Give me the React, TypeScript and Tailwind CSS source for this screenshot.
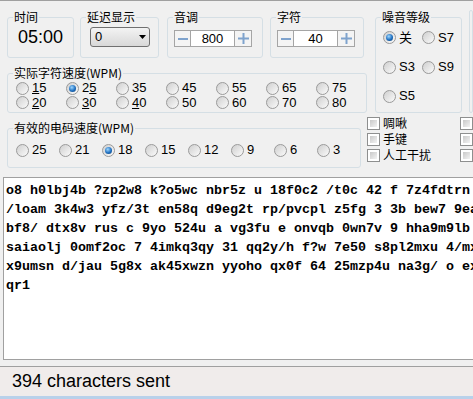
import type { ReactNode } from "react"

const cjk = "font-['Noto_Sans_CJK_SC','Noto_Sans',sans-serif]"
const latin = "font-['Liberation_Sans','Noto_Sans_CJK_SC',sans-serif]"

function Group({ title, className, children }: { title?: string; className: string; children?: ReactNode }) {
  return (
    <fieldset className={`rounded-[3px] border border-[#d5dfe5] ${className}`}>
      {title && <legend className={`ml-[5px] px-[1px] text-[12px] leading-[14px] ${cjk}`}>{title}</legend>}
      {children}
    </fieldset>
  )
}

function Radio({ on, children, className = "" }: { on?: boolean; children: ReactNode; className?: string }) {
  return (
    <label className={`flex items-center gap-[3px] ${className}`}>
      <span className="flex size-[13px] shrink-0 items-center justify-center rounded-full border border-[#9a9a9a] bg-linear-to-br from-[#cfcfcf] to-[#fbfbfb]">
        {on && <span className="size-[7px] rounded-full bg-[radial-gradient(circle_at_40%_35%,#9fd8ff,#1f6fc0_55%,#0c3a6c)]" />}
      </span>
      <span className={`text-[13px] leading-[14px] ${latin}`}>{children}</span>
    </label>
  )
}

function Check({ children }: { children?: ReactNode }) {
  return (
    <label className="flex h-[16px] items-center gap-[3px]">
      <span className="size-[13px] shrink-0 border border-[#8e8f8f] bg-white p-[2px]">
        <span className="block size-full bg-linear-to-br from-[#c9c9c9] to-[#f3f3f3]" />
      </span>
      {children && <span className={`text-[12px] leading-[14px] ${cjk}`}>{children}</span>}
    </label>
  )
}

function Spinner({ value }: { value: string }) {
  return (
    <div className="ml-[6px] mt-[6px] flex h-[17px] w-[78px] border border-[#a5a5a5] bg-white">
      <span className="flex w-[16px] items-center justify-center border-r border-[#a5a5a5] bg-[#f4f4f4]">
        <span className="h-[2px] w-[10px] bg-[#7fa3cd]" />
      </span>
      <span className={`flex flex-1 items-center justify-center text-[13px] ${latin}`}>{value}</span>
      <span className="flex w-[17px] items-center justify-center border-l border-[#a5a5a5] bg-[#f4f4f4]">
        <svg width="11" height="11" viewBox="0 0 11 11">
          <path d="M0 5.5H11M5.5 0V11" stroke="#7fa3cd" strokeWidth="2" />
        </svg>
      </span>
    </div>
  )
}

const speeds = [
  [<><u>1</u>5</>, false], [<>2<u>5</u></>, true], ["35", false], ["45", false], ["55", false], ["65", false], ["75", false],
] as const
const speeds2 = [<><u>2</u>0</>, <><u>3</u>0</>, <><u>4</u>0</>, "50", "60", "70", "80"]
const effective = ["25", "21", "18", "15", "12", "9", "6", "3"]

const lines = [
  "o8 h0lbj4b ?zp2w8 k?o5wc nbr5z u 18f0c2 /t0c 42 f 7z4fdtrn",
  "/loam 3k4w3 yfz/3t en58q d9eg2t rp/pvcpl z5fg 3 3b bew7 9ea",
  "bf8/ dtx8v rus c 9yo 524u a vg3fu e onvqb 0wn7v 9 hha9m9lb b",
  "saiaolj 0omf2oc 7 4imkq3qy 31 qq2y/h f?w 7e50 s8pl2mxu 4/mx",
  "x9umsn d/jau 5g8x ak45xwzn yyoho qx0f 64 25mzp4u na3g/ o ex",
  "qr1",
]

export default function App() {
  return (
    <div className="flex h-[399px] w-[473px] flex-col overflow-hidden bg-[#f0f0f0] text-black">
      <div className="h-[1px] bg-[#a0a0a0]" />

      <div className="mt-[9px] flex items-start">
        <div className="ml-[7px] w-[360px]">
          <div className="flex h-[48px]">
            <Group title="时间" className="h-[48px] w-[67px]">
              <div className={`pl-[10px] pt-[3px] text-[18px] leading-[20px] ${latin}`}>05:00</div>
            </Group>
            <Group title="延迟显示" className="ml-[6px] h-[48px] w-[79px]">
              <div className="ml-[9px] mt-[3px] flex h-[20px] w-[60px] items-center justify-between rounded-[3px] border border-[#707070] bg-linear-to-b from-[#f3f3f3] to-[#d8d8d8] pl-[4px] pr-[3px]">
                <span className={`text-[13px] ${latin}`}>0</span>
                <svg width="7" height="4" viewBox="0 0 7 4">
                  <path d="M0 0H7L3.5 4Z" fill="#000" />
                </svg>
              </div>
            </Group>
            <Group title="音调" className="ml-[8px] h-[48px] w-[96px]">
              <Spinner value="800" />
            </Group>
            <Group title="字符" className="ml-[7px] h-[48px] w-[94px]">
              <Spinner value="40" />
            </Group>
          </div>
          <Group title="实际字符速度(WPM)" className="mt-[8px] h-[47px] w-[360px]">
            <div className="flex h-[15px] items-center pl-[8px] pt-[1px]">
              {speeds.map(([label, on], i) => (
                <Radio key={i} on={on} className="w-[50px]">{label}</Radio>
              ))}
            </div>
            <div className="flex h-[15px] items-center pl-[8px]">
              {speeds2.map((label, i) => (
                <Radio key={i} className="w-[50px]">{label}</Radio>
              ))}
            </div>
          </Group>
        </div>

        <Group title="噪音等级" className="ml-[8px] h-[103px] w-[88px]">
          <div className="grid grid-cols-[39px_39px] gap-y-[15px] pl-[7px] pt-[6px]">
            <Radio on><span className={cjk}>关</span></Radio>
            <Radio>S7</Radio>
            <Radio>S3</Radio>
            <Radio>S9</Radio>
            <Radio>S5</Radio>
          </div>
        </Group>
        <Group className="ml-[7px] h-[103px] w-[20px]" />
      </div>

      <div className="mt-[2px] flex items-start">
        <Group title="有效的电码速度(WPM)" className="ml-[7px] mt-[6px] h-[47px] w-[361px]">
          <div className="flex h-[14px] items-center pl-[8px] mt-[8px]">
            {effective.map((v) => (
              <Radio key={v} on={v === "18"} className="w-[43px]">{v}</Radio>
            ))}
          </div>
        </Group>
        <div className="ml-[6px] flex w-[97px] flex-col">
          <Check>啁啾</Check>
          <Check>手键</Check>
          <Check>人工干扰</Check>
        </div>
        <div className="flex flex-col">
          <Check />
          <Check />
          <Check />
        </div>
      </div>

      <div className="ml-[3px] mt-[9px] h-[183px] w-[490px] shrink-0 border border-[#a0a0a0] bg-white pl-[2px] pt-[3px]">
        {lines.map((l, i) => (
          <div key={i} className="whitespace-pre font-['Liberation_Mono',monospace] text-[13.33px] font-bold leading-[19px]">
            {l}
          </div>
        ))}
      </div>

      <div className={`mt-[6px] flex h-[30px] shrink-0 items-center border-t border-[#a0a0a0] bg-[#f0eceb] pl-[12px] text-[18px] ${latin}`}>
        394 characters sent
      </div>
      <div className="h-[3px] shrink-0 bg-[#b9d1ea]" />
    </div>
  )
}
